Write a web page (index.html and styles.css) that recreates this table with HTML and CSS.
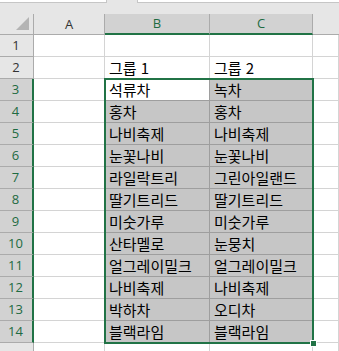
FILE: index.html
```html
<!DOCTYPE html>
<html lang="ko">
<head>
  <meta charset="UTF-8" />
  <meta name="viewport" content="width=device-width, initial-scale=1.0" />
  <title>그룹 시트</title>
  <link rel="stylesheet" href="styles.css">
</head>
<body>
  <div class="toolbar">
    <div class="box name-box"></div>
    <div class="box formula-box"></div>
  </div>

  <div class="sheet">
    <div class="grid">
      <div class="corner"><span class="tri"></span></div>
      <div class="col-head">A</div>
      <div class="col-head sel">B</div>
      <div class="col-head sel">C</div>
      <div class="col-head"></div>
    </div>
    <div id="rows"></div>

    <div class="selection"><span class="handle"></span></div>
  </div>

  <script>
    const data = [
      ['', ''],
      ['그룹 1', '그룹 2'],
      ['석류차', '녹차'],
      ['홍차', '홍차'],
      ['나비축제', '나비축제'],
      ['눈꽃나비', '눈꽃나비'],
      ['라일락트리', '그린아일랜드'],
      ['딸기트리드', '딸기트리드'],
      ['미숫가루', '미숫가루'],
      ['산타멜로', '눈뭉치'],
      ['얼그레이밀크', '얼그레이밀크'],
      ['나비축제', '나비축제'],
      ['박하차', '오디차'],
      ['블랙라임', '블랙라임']
    ];

    const rows = document.getElementById('rows');
    data.forEach((r, i) => {
      const n = i + 1;
      const inSel = n >= 3 && n <= 14;
      const row = document.createElement('div');
      row.className = 'grid row' + (inSel ? ' in-sel' : '');
      row.innerHTML =
        `<div class="row-head${inSel ? ' sel' : ''}">${n}</div>` +
        `<div class="cell"></div>` +
        `<div class="cell b${inSel && n !== 3 ? ' hl' : ''}">${r[0]}</div>` +
        `<div class="cell c${inSel ? ' hl' : ''}">${r[1]}</div>` +
        `<div class="cell"></div>`;
      rows.appendChild(row);
    });

    // next row, only its top edge is on screen
    const tail = document.createElement('div');
    tail.className = 'grid row';
    tail.innerHTML = '<div class="row-head"></div><div class="cell"></div>'
      + '<div class="cell"></div><div class="cell"></div><div class="cell"></div>';
    rows.appendChild(tail);
  </script>
</body>
</html>
```

FILE: styles.css
```css
* {
  margin: 0;
  padding: 0;
  box-sizing: border-box;
}

body {
  background: #fff;
  font-family: 'Noto Sans CJK KR', 'Noto Sans', sans-serif;
  overflow: hidden;
}

.toolbar {
  height: 14px;
  background: #e6e6e6;
  display: flex;
}

.box {
  height: 3px;
  background: #fff;
  border-bottom: 1px solid #c6c6c6;
}

.name-box {
  width: 107px;
  border-right: 1px solid #c6c6c6;
}

.formula-box {
  flex: 1;
  margin-left: 30px;
  border-left: 1px solid #c6c6c6;
}

.sheet {
  position: relative;
}

.grid {
  display: grid;
  grid-template-columns: 34px 71px 105px 103px 1fr;
  height: 21px;
}

.grid.row {
  height: 22px;
}

.corner {
  background: #e6e6e6;
  border-right: 1px solid #ababab;
  border-bottom: 1px solid #ababab;
  position: relative;
}

.corner .tri {
  position: absolute;
  right: 4px;
  bottom: 4px;
  width: 0;
  height: 0;
  border-left: 13px solid transparent;
  border-bottom: 13px solid #b4b4b4;
}

.col-head {
  background: #e6e6e6;
  border-right: 1px solid #ababab;
  border-bottom: 1px solid #ababab;
  font-family: 'Open Sans', 'Noto Sans', sans-serif;
  font-size: 13px;
  line-height: 20px;
  text-align: center;
  color: #333;
}

.col-head:last-child {
  border-right: none;
}

.col-head.sel {
  background: #d2d2d2;
  color: #1e6b42;
  border-bottom: 2px solid #217346;
  line-height: 19px;
}

.row-head {
  background: #e6e6e6;
  border-right: 1px solid #ababab;
  border-bottom: 1px solid #ababab;
  font-family: 'Open Sans', 'Noto Sans', sans-serif;
  font-size: 13px;
  line-height: 21px;
  text-align: center;
  color: #333;
  padding-right: 1px;
}

.row-head.sel {
  background: #d2d2d2;
  color: #1e6b42;
  border-right: 2px solid #217346;
}

.cell {
  border-right: 1px solid #d4d4d4;
  border-bottom: 1px solid #d4d4d4;
  font-size: 15px;
  line-height: 21px;
  padding-left: 4px;
  color: #000;
  white-space: nowrap;
  overflow: visible;
}

.cell.hl {
  background: #c6c6c6;
  border-right-color: #9e9e9e;
  border-bottom-color: #9e9e9e;
}

.in-sel .cell.b {
  border-right-color: #9e9e9e;
  border-bottom-color: #9e9e9e;
}

/* selected range outline with fill handle */
.selection {
  position: absolute;
  left: 104px;
  top: 64px;
  width: 210px;
  height: 266px;
  border: 2px solid #217346;
  pointer-events: none;
}

.handle {
  position: absolute;
  right: -5px;
  bottom: -5px;
  width: 7px;
  height: 7px;
  background: #217346;
  border: 1px solid #fff;
}
```
